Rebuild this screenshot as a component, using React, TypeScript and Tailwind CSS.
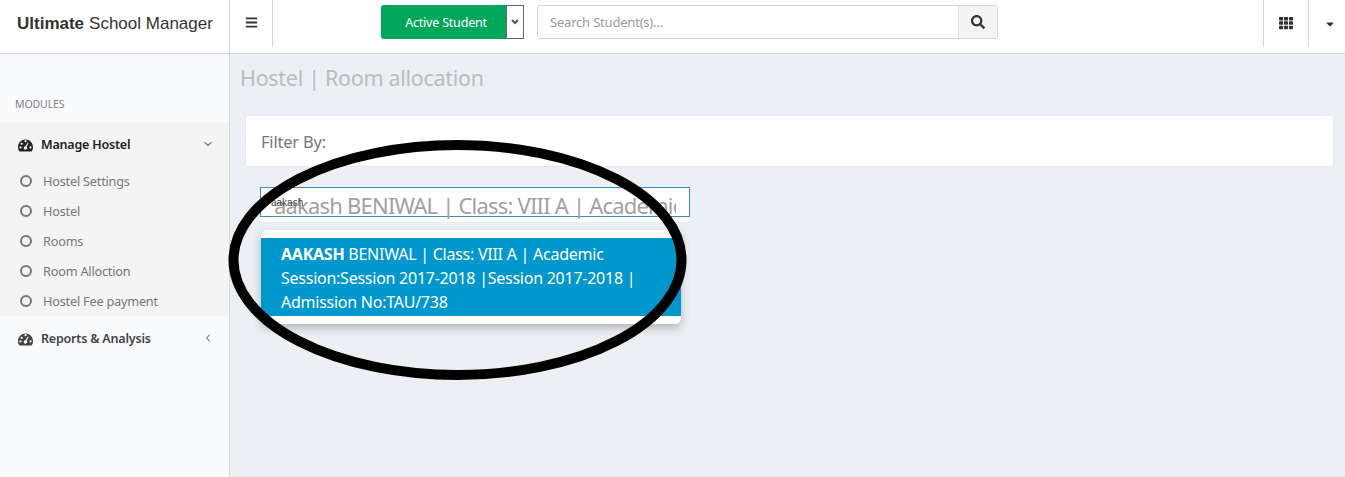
import { FaBars, FaCaretDown, FaSearch, FaTh } from "react-icons/fa";
import { ChevronDown, ChevronLeft } from "lucide-react";

const hostelLinks = ["Hostel Settings", "Hostel", "Rooms", "Room Alloction", "Hostel Fee payment"];

function GaugeIcon() {
  return (
    <svg width="15" height="13" viewBox="0 0 15 13" className="shrink-0">
      <path
        fillRule="evenodd"
        fill="currentColor"
        d="M7.5 0.5C3.4 0.5 0 3.9 0 8c0 1.7 .5 3.2 1.5 4.5h12c1-1.3 1.5-2.8 1.5-4.5C15 3.9 11.6 .5 7.5 .5zM6.5 2.2a1.1 1.1 0 1 0 2.2 0a1.1 1.1 0 1 0-2.2 0zM2.6 4.8a1.1 1.1 0 1 0 2.2 0a1.1 1.1 0 1 0-2.2 0zM1.4 8.4a1.1 1.1 0 1 0 2.2 0a1.1 1.1 0 1 0-2.2 0zM11.4 8.4a1.1 1.1 0 1 0 2.2 0a1.1 1.1 0 1 0-2.2 0zM9.9 3.6L7.4 7.2a1.7 1.7 0 1 0 1.3 .5l1.9-3.7z"
      />
    </svg>
  );
}

function TopBar() {
  return (
    <header className="flex h-[54px] shrink-0 border-b border-[#d2d6de] bg-white">
      <div className="flex w-[230px] shrink-0 items-center border-r border-[#d2d6de] pb-[6px] pl-[17px] font-['Liberation_Sans',sans-serif] text-[17px] text-[#333]">
        <b className="mr-[5px]">Ultimate</b> School Manager
      </div>
      <div className="flex h-[47px] w-[43px] shrink-0 items-center justify-center border-r border-[#d2d6de] pb-[2px] text-[#333]">
        <FaBars size={13} />
      </div>
      <div className="ml-[108px] mt-[5px] flex h-[34px] w-[143px] shrink-0 rounded-[3px] bg-[#00a65a] text-white">
        <span className="flex flex-1 items-center justify-center pl-[5px] pt-[2px] text-[12.5px] tracking-[-0.2px]">Active Student</span>
        <span className="flex w-[18px] items-center justify-center border border-[#666] bg-white text-[#555]">
          <svg width="8" height="6" viewBox="0 0 8 6" fill="none" stroke="currentColor" strokeWidth="2">
            <path d="M1 1l3 3 3-3" />
          </svg>
        </span>
      </div>
      <div className="ml-[13px] mt-[5px] flex h-[34px] w-[461px] shrink-0 rounded-[3px] border border-[#d2d6de]">
        <span className="flex flex-1 items-center pl-3 pt-[2px] text-[13px] tracking-[-0.2px] text-[#999]">Search Student(s)...</span>
        <span className="flex w-[39px] items-center justify-center border-l border-[#e4e4e4] bg-[#f4f4f4] text-[#333]">
          <FaSearch size={14} />
        </span>
      </div>
      <div className="ml-auto flex h-[47px]">
        <div className="flex w-[46px] items-center justify-center border-x border-[#d2d6de] pb-[2px] text-[#333]">
          <FaTh size={14} />
        </div>
        <div className="flex w-[36px] items-center justify-center pl-[6px] text-[#333]">
          <FaCaretDown size={12} />
        </div>
      </div>
    </header>
  );
}

function Sidebar() {
  return (
    <aside className="w-[230px] shrink-0 border-r border-[#d2d6de] bg-[#f9fafc]">
      <p className="pl-[15px] pt-[43px] text-[10.5px] leading-[15px] tracking-[-0.1px] text-[#848484]">MODULES</p>
      <div className="mt-[10px] bg-[#f4f4f5]">
        <div className="flex h-[44px] items-center pl-[18px] pr-[15px] pt-[2px] text-[12.5px] font-semibold tracking-[-0.2px] text-[#222]">
          <GaugeIcon />
          <span className="ml-2">Manage Hostel</span>
          <ChevronDown size={12} strokeWidth={2} className="ml-auto mb-[3px]" />
        </div>
        <ul className="text-[12.7px] tracking-[-0.2px] text-[#777]">
          {hostelLinks.map((link) => (
            <li key={link} className="flex h-[30px] items-center pl-[20px] pt-[2px]">
              <span className="mb-[2px] h-[12px] w-[12px] rounded-full border-2 border-[#777]" />
              <span className="ml-[11px]">{link}</span>
            </li>
          ))}
        </ul>
      </div>
      <div className="flex h-[44px] items-center pl-[18px] pr-[15px] pt-[2px] text-[12.5px] font-semibold tracking-[-0.2px] text-[#444]">
        <GaugeIcon />
        <span className="ml-2">Reports &amp; Analysis</span>
        <ChevronLeft size={12} strokeWidth={2} className="ml-auto mb-[3px]" />
      </div>
    </aside>
  );
}

function Content() {
  return (
    <main className="relative flex-1 bg-[#ecf0f5] pl-[11px] pr-[11px]">
      <h1 className="ml-[-1px] pt-[9px] text-[21.5px] leading-[30px] tracking-[-0.3px] text-[#bbb]">Hostel | Room allocation</h1>
      <div className="ml-[4px] mt-[22px] flex h-[52px] items-center rounded-[3px] border border-[#e5e8ee] bg-white pl-[15px] pt-[2px] text-[16.5px] tracking-[-0.2px] text-[#777]">
        Filter By:
      </div>
      <div className="relative ml-[19px] mt-[20px] h-[35px] w-[430px] rounded-b-[6px] bg-white">
        <div className="flex h-[30px] items-center border border-[#3c8dbc] pl-[13px] pr-[13px] pt-[7px]">
          <span className="overflow-hidden whitespace-nowrap text-[22px] tracking-[-0.8px] text-[#a39f9f]">aakash BENIWAL | Class: VIII A | Academic</span>
        </div>
        <span className="absolute left-[11px] top-[8px] font-['Liberation_Sans',sans-serif] text-[10px] text-[#444]">aakash</span>
      </div>
      <div className="ml-[20px] mt-[8px] w-[420px] rounded-[6px] bg-white py-2 shadow-[0_4px_10px_rgba(0,0,0,0.25)]">
        <div className="bg-[#0097cf] pb-[2px] pl-5 pr-[30px] pt-[4px] text-[16px] leading-[24px] tracking-[-0.25px] text-white">
          <b>AAKASH</b> BENIWAL | Class: VIII A | Academic Session:Session 2017-2018 |Session 2017-2018 | Admission No:TAU/738
        </div>
      </div>
    </main>
  );
}

export default function App() {
  return (
    <div className="relative flex h-[477px] w-[1345px] flex-col overflow-hidden bg-white font-['Noto_Sans',sans-serif]">
      <TopBar />
      <div className="flex flex-1">
        <Sidebar />
        <Content />
      </div>
      {/* hand-drawn circle over the screenshot */}
      <svg className="pointer-events-none absolute left-0 top-0" width="1345" height="477">
        <ellipse cx="457.5" cy="260" rx="224" ry="115" fill="none" stroke="#000" strokeWidth="10" />
      </svg>
    </div>
  );
}
